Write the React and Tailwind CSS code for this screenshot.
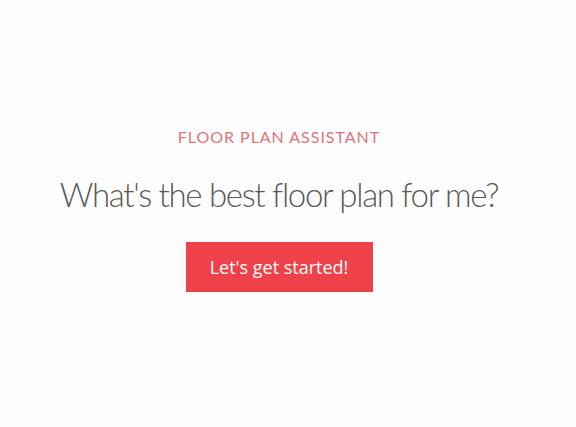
export default function App() {
  return (
    <div className="h-[427px] w-full bg-[#fefefe]">
      <div className="flex w-[558px] flex-col items-center pt-[126px]">
        <p className="font-['Lato',sans-serif] text-[16px] leading-[22px] tracking-[0.06em] text-[#e0737b]">
          FLOOR PLAN ASSISTANT
        </p>
        <h1 className="mt-[24px] font-['Lato',sans-serif] text-[33px] font-light leading-[44px] tracking-[-0.04em] text-[#595959]">
          What's the best floor plan for me?
        </h1>
        <button className="mt-[26px] h-[50px] w-[187px] bg-[#ee4149] font-['Open_Sans',sans-serif] text-[18px] font-medium text-white">
          Let's get started!
        </button>
      </div>
    </div>
  );
}
